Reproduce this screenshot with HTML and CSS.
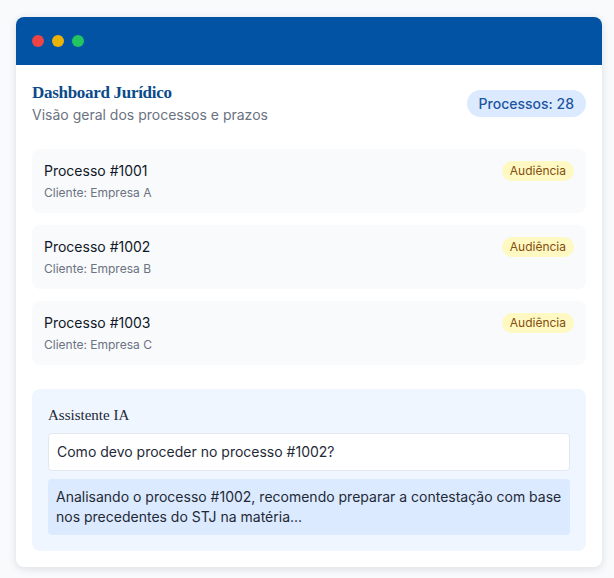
FILE: index.html
```html
<!DOCTYPE html>
<html lang="pt">
<head>
<meta charset="utf-8">
<title>Dashboard Jurídico</title>
<link rel="stylesheet" href="styles.css">
</head>
<body>
<div class="card">
  <div class="titlebar">
    <span class="dot red"></span>
    <span class="dot yellow"></span>
    <span class="dot green"></span>
  </div>
  <div class="content">
    <div class="head">
      <div>
        <h1 class="title">Dashboard Jurídico</h1>
        <p class="subtitle">Visão geral dos processos e prazos</p>
      </div>
      <span class="count">Processos: 28</span>
    </div>
    <div class="list">
      <div class="item">
        <div>
          <div class="item-title">Processo #1001</div>
          <div class="item-sub">Cliente: Empresa A</div>
        </div>
        <span class="tag">Audiência</span>
      </div>
      <div class="item">
        <div>
          <div class="item-title">Processo #1002</div>
          <div class="item-sub">Cliente: Empresa B</div>
        </div>
        <span class="tag">Audiência</span>
      </div>
      <div class="item">
        <div>
          <div class="item-title">Processo #1003</div>
          <div class="item-sub">Cliente: Empresa C</div>
        </div>
        <span class="tag">Audiência</span>
      </div>
    </div>
    <div class="assistant">
      <h2 class="assistant-title">Assistente IA</h2>
      <div class="question">Como devo proceder no processo #1002?</div>
      <div class="answer">Analisando o processo #1002, recomendo preparar a contestação com base nos precedentes do STJ na matéria...</div>
    </div>
  </div>
</div>
</body>
</html>
```
FILE: styles.css
```css
* { box-sizing: border-box; }
html, body { margin: 0; }
body {
  background: #f8fafc;
  padding: 17px 12px 11px 16px;
  font-family: "Inter", "Liberation Sans", sans-serif;
  color: #111827;
}
.card {
  background: #ffffff;
  border-radius: 8px;
  overflow: hidden;
  box-shadow: 0 2px 8px rgba(15, 23, 42, 0.12);
}
.titlebar {
  height: 48px;
  background: #0353a4;
  display: flex;
  align-items: center;
  gap: 8px;
  padding: 0 16px;
}
.dot { width: 12px; height: 12px; border-radius: 50%; }
.red { background: #ef4444; }
.yellow { background: #eab308; }
.green { background: #22c55e; }
.content { padding: 16px; }
.head {
  display: flex;
  justify-content: space-between;
  align-items: center;
  margin-bottom: 24px;
}
.title {
  margin: 0;
  font-family: "Liberation Serif", "DejaVu Serif", serif;
  font-weight: 700;
  font-size: 17px;
  line-height: 24px;
  color: #0b4a8b;
  letter-spacing: -0.3px;
}
.subtitle {
  margin: 0;
  font-size: 14px;
  line-height: 20px;
  color: #6b7280;
}
.count {
  background: #dbeafe;
  color: #1e55a0;
  font-size: 14px;
  font-weight: 500;
  line-height: 19px;
  padding: 4px 12px;
  border-radius: 999px;
}
.list { display: flex; flex-direction: column; gap: 12px; }
.item {
  background: #f8fafc;
  border-radius: 8px;
  padding: 12px;
  display: flex;
  justify-content: space-between;
  align-items: flex-start;
}
.item-title { font-size: 14px; line-height: 20px; color: #111827; }
.item-sub { font-size: 12px; line-height: 16px; color: #6b7280; margin-top: 4px; }
.tag {
  background: #fef9c3;
  color: #854d0e;
  font-size: 12px;
  line-height: 16px;
  padding: 2px 8px;
  border-radius: 999px;
}
.assistant {
  margin-top: 24px;
  background: #eff6ff;
  border-radius: 8px;
  padding: 16px;
}
.assistant-title {
  margin: 0 0 8px;
  font-family: "Liberation Serif", "DejaVu Serif", serif;
  font-weight: 400;
  font-size: 15px;
  line-height: 20px;
  color: #1f2937;
}
.question {
  background: #ffffff;
  border: 1px solid #e2e8f0;
  border-radius: 4px;
  padding: 8px;
  font-size: 14px;
  line-height: 20px;
  color: #1f2937;
}
.answer {
  margin-top: 8px;
  background: #dbeafe;
  border-radius: 4px;
  padding: 8px;
  font-size: 14px;
  line-height: 20px;
  color: #1f2937;
}
```
